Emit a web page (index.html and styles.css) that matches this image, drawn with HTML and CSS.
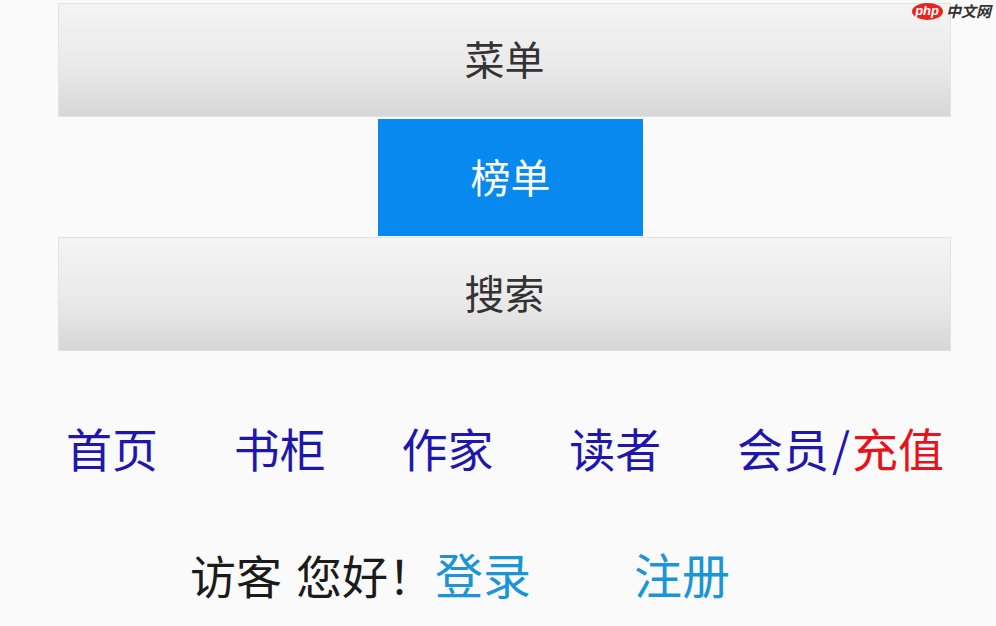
FILE: index.html
```html
<!DOCTYPE html>
<html lang="zh">
<head>
<meta charset="utf-8">
<title>菜单</title>
<link rel="stylesheet" href="styles.css">
</head>
<body>
<div class="page">
  <div class="bar">菜单</div>
  <div class="active">榜单</div>
  <div class="bar">搜索</div>
  <nav class="nav">
    <a class="nav-item">首页</a>
    <a class="nav-item">书柜</a>
    <a class="nav-item">作家</a>
    <a class="nav-item">读者</a>
    <a class="nav-item">会员<span class="slash">/</span><span class="red">充值</span></a>
  </nav>
  <div class="guest">
    <span class="hello">访客<span class="sp"> </span>您好！</span>
    <a class="link">登录</a>
    <a class="link reg">注册</a>
  </div>
</div>
<div class="mark"><span class="php">php</span><span class="cn">中文网</span></div>
</body>
</html>
```
FILE: styles.css
```css
html, body {
  margin: 0;
  padding: 0;
  background: #fafafa;
  font-family: "Noto Sans CJK SC", "Noto Sans", sans-serif;
}
.page {
  width: 893px;
  padding: 3px 0 0 58px;
}
.bar {
  height: 108px;
  padding-bottom: 4px;
  border: 1px solid #e3e3e3;
  background: linear-gradient(to bottom, #f4f4f4 0%, #eaeaea 55%, #d7d7d7 100%);
  display: flex;
  align-items: center;
  justify-content: center;
  font-size: 40px;
  color: #333;
}
.active {
  width: 265px;
  height: 113px;
  padding-bottom: 4px;
  margin: 2px 0 1px 320px;
  background: #0789ef;
  color: #fff;
  display: flex;
  align-items: center;
  justify-content: center;
  font-size: 40px;
}
.nav {
  display: flex;
  justify-content: space-between;
  margin: 66px 7px 0 8px;
  font-size: 46px;
  line-height: 60px;
}
.nav-item {
  color: #1f17ad;
}
.slash {
  margin: 0 2px 0 3px;
}
.red {
  color: #e8121b;
}
.guest {
  display: flex;
  align-items: baseline;
  margin: 66px 0 0 132px;
  font-size: 46px;
  line-height: 60px;
}
.hello {
  color: #1b1b1b;
}
.sp {
  display: inline-block;
  width: 14px;
}
.link {
  color: #1c95d7;
  font-size: 48px;
  margin-left: 1px;
}
.reg {
  margin-left: 103px;
}
.mark {
  position: absolute;
  top: 2px;
  right: 3px;
  display: flex;
  align-items: center;
}
.php {
  background: #e8251f;
  color: #fff;
  font-family: "Liberation Sans", sans-serif;
  font-style: italic;
  font-weight: bold;
  font-size: 13px;
  line-height: 16px;
  padding: 0 4px 1px 3px;
  border-radius: 50%;
}
.cn {
  margin-left: 3px;
  padding-right: 2px;
  color: #333;
  font-size: 15px;
  font-weight: bold;
  font-style: italic;
  line-height: 18px;
}
```
